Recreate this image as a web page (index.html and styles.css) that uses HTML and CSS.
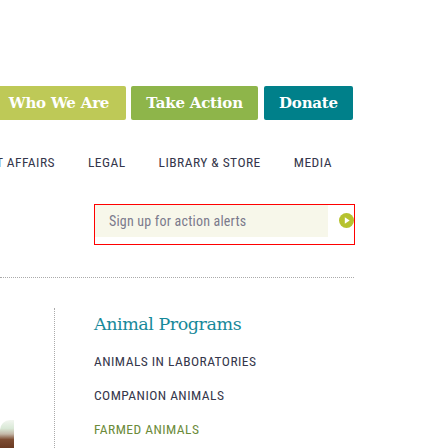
FILE: index.html
```html
<!DOCTYPE html>
<html>
<head>
<meta charset="utf-8">
<link rel="stylesheet" href="styles.css">
</head>
<body>
<div class="page">
  <div class="tabs">
    <a class="tab tab-who">Who We Are</a>
    <a class="tab tab-act">Take Action</a>
    <a class="tab tab-don">Donate</a>
  </div>
  <nav class="nav">
    <span class="nav-first"><span class="nav-item">Government Affairs</span></span>
    <span class="nav-item">Legal</span>
    <span class="nav-item">Library &amp; Store</span>
    <span class="nav-item">Media</span>
  </nav>
  <form class="signup">
    <div class="signup-field">Sign up for action alerts</div>
    <span class="signup-go">
      <svg width="15" height="15" viewBox="0 0 15 15"><circle cx="7.5" cy="7.5" r="7.5" fill="#b6c22e"/><path d="M5.8 4.3 L10.7 7.5 L5.8 10.7 Z" fill="#fff"/></svg>
    </span>
  </form>
  <div class="rule"></div>
  <div class="menu">
    <div class="thumb"></div>
    <div class="menu-col">
      <h2 class="menu-title">Animal Programs</h2>
      <a class="menu-link">Animals in Laboratories</a>
      <a class="menu-link">Companion Animals</a>
      <a class="menu-link menu-link-green">Farmed Animals</a>
    </div>
  </div>
</div>
</body>
</html>
```
FILE: styles.css
```css
html, body {
  margin: 0;
  padding: 0;
  background: #fff;
}
.page {
  width: 448px;
  height: 448px;
  overflow: hidden;
}
.tabs {
  display: flex;
  gap: 5px;
  margin-top: 86px;
  height: 34px;
}
.tab {
  display: flex;
  align-items: center;
  justify-content: center;
  height: 34px;
  border-radius: 2px;
  color: #fff;
  font-family: "DejaVu Serif", serif;
  font-weight: bold;
  font-size: 15px;
  letter-spacing: -0.2px;
  line-height: 18px;
}
.tab-who { width: 134px; margin-left: -8px; background: #bec957; }
.tab-act { width: 127px; background: #8eb54a; }
.tab-don { width: 89px; margin-left: 1px; background: #00808a; }

.nav {
  display: flex;
  gap: 33px;
  margin-top: 34px;
  white-space: nowrap;
  font-family: "Roboto", sans-serif;
  font-stretch: 75%;
  font-size: 13.5px;
  letter-spacing: 0.45px;
  text-transform: uppercase;
  color: #35374b;
  line-height: 16px;
}
.nav-first {
  display: flex;
  justify-content: flex-end;
  width: 55px;
}
.signup {
  display: flex;
  align-items: flex-start;
  margin: 34px 0 0 94px;
  width: 259px;
  height: 39px;
  border: 1px solid #f00;
}
.signup-field {
  width: 234px;
  height: 32px;
  background: #f7f7ea;
  padding-left: 14px;
  box-sizing: border-box;
  display: flex;
  align-items: center;
  font-family: "Roboto", sans-serif;
  font-stretch: 75%;
  font-size: 14px;
  letter-spacing: 0.2px;
  color: #7b7a8c;
}
.signup-go {
  display: flex;
  margin: 8px 0 0 11px;
}
.rule {
  width: 354px;
  margin-top: 32px;
  border-top: 1px dotted #aaa;
}
.menu {
  display: flex;
  margin-top: 30px;
  height: 160px;
}
.thumb {
  width: 14px;
  height: 28px;
  margin-top: 112px;
  background: linear-gradient(#f2f6f0 0%, #d9e8d6 30%, #c4b8a8 50%, #7d4c32 70%, #6a3a22 100%);
  border-radius: 10px 0 0 0;
}
.menu-col {
  margin-left: 40px;
  border-left: 1px dotted #aaa;
  padding-left: 39px;
  display: flex;
  flex-direction: column;
  align-items: flex-start;
}
.menu-title {
  margin: 5px 0 0 0;
  font-family: "DejaVu Serif", serif;
  font-weight: normal;
  font-size: 17.5px;
  letter-spacing: -0.45px;
  color: #17899a;
  line-height: 22px;
}
.menu-link {
  margin-top: 18px;
  font-family: "Roboto", sans-serif;
  font-stretch: 75%;
  font-size: 13.5px;
  letter-spacing: 0.45px;
  text-transform: uppercase;
  color: #35374b;
  line-height: 16px;
}
.menu-link-green { color: #6c8b3a; }
```
